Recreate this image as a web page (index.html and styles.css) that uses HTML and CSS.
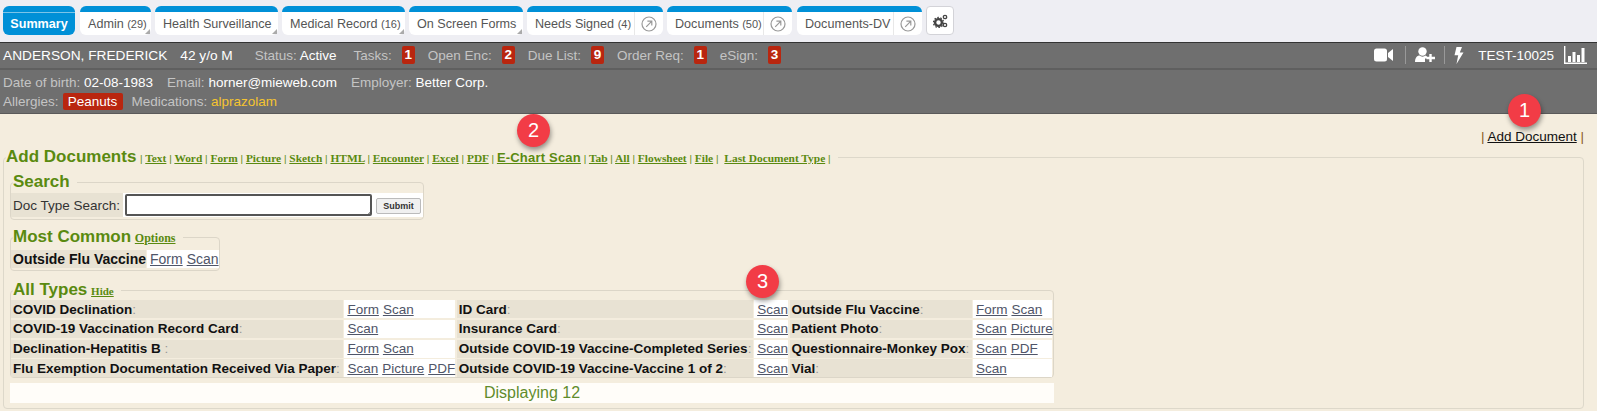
FILE: index.html
```html
<!DOCTYPE html>
<html>

<head>
    <title>Add Documents</title>
    <link rel="stylesheet" href="styles.css">
</head>

<body>
    <div class="page">
        <div class="tabs">
            <a class="tab tab-active w-summary"><span class="tab-label">Summary</span></a>
            <a class="tab w-admin"><span class="tab-label">Admin <small>(29)</small></span><i class="corner"></i></a>
            <a class="tab w-health"><span class="tab-label">Health Surveillance</span><i class="corner"></i></a>
            <a class="tab w-medical"><span class="tab-label">Medical Record <small>(16)</small></span><i class="corner"></i></a>
            <a class="tab w-forms"><span class="tab-label">On Screen Forms</span><i class="corner"></i></a>
            <a class="tab w-signed">
                <span class="tab-label">Needs Signed <small>(4)</small></span>
                <span class="tab-pop"><svg width="16" height="16" viewBox="0 0 16 16"><circle cx="8" cy="8" r="7" fill="none" stroke="#999" stroke-width="1.2"/><path d="M5.2 10.8 L10.6 5.4 M6.4 5.2 H10.8 V9.6" fill="none" stroke="#999" stroke-width="1.2"/></svg></span>
            </a>
            <a class="tab w-docs">
                <span class="tab-label">Documents <small>(50)</small></span>
                <span class="tab-pop"><svg width="16" height="16" viewBox="0 0 16 16"><circle cx="8" cy="8" r="7" fill="none" stroke="#999" stroke-width="1.2"/><path d="M5.2 10.8 L10.6 5.4 M6.4 5.2 H10.8 V9.6" fill="none" stroke="#999" stroke-width="1.2"/></svg></span>
            </a>
            <a class="tab w-docsdv">
                <span class="tab-label">Documents-DV</span>
                <span class="tab-pop"><svg width="16" height="16" viewBox="0 0 16 16"><circle cx="8" cy="8" r="7" fill="none" stroke="#999" stroke-width="1.2"/><path d="M5.2 10.8 L10.6 5.4 M6.4 5.2 H10.8 V9.6" fill="none" stroke="#999" stroke-width="1.2"/></svg></span>
            </a>
            <a class="gear-btn">
                <svg width="15" height="14" viewBox="0 0 15 14"><circle cx="5.5" cy="8.5" r="3.4" fill="none" stroke="#444" stroke-width="2.4"/><circle cx="5.5" cy="8.5" r="5" fill="none" stroke="#444" stroke-width="1.3" stroke-dasharray="1.6 1.5"/><circle cx="12" cy="3" r="1.7" fill="none" stroke="#444" stroke-width="1.3"/><circle cx="12" cy="11" r="1.7" fill="none" stroke="#444" stroke-width="1.3"/></svg>
            </a>
        </div>

        <div class="patient">
            <div class="patient-top">
                <span class="name">ANDERSON, FREDERICK</span>
                <span class="name age">42 y/o M</span>
                <span class="item status">Status: <b>Active</b></span>
                <span class="item i-tasks">Tasks:</span><span class="count">1</span>
                <span class="item">Open Enc:</span><span class="count">2</span>
                <span class="item">Due List:</span><span class="count">9</span>
                <span class="item">Order Req:</span><span class="count">1</span>
                <span class="item">eSign:</span><span class="count">3</span>
                <div class="patient-tools">
                    <svg class="tool video" width="19" height="14" viewBox="0 0 19 14"><rect x="0" y="0.5" width="13" height="13" rx="2.5" fill="#fff"/><path d="M14 5 L19 1 V13 L14 9 Z" fill="#fff"/></svg>
                    <svg class="tool adduser" width="21" height="16" viewBox="0 0 21 16"><circle cx="7.5" cy="4.5" r="4.2" fill="#fff"/><path d="M0 15 C0 10.5 2.5 8.5 4.5 8.5 C6 10 9 10 10.5 8.5 L12 9.5 V11.5 H10 V15 Z" fill="#fff"/><path d="M15.5 7 V15 M11.5 11 H20" stroke="#fff" stroke-width="2.4"/></svg>
                    <svg class="tool bolt" width="10" height="17" viewBox="0 0 10 17"><path d="M2.5 0 H8 L5.8 5.5 H9.5 L2.5 17 L4.2 8.2 H0.5 Z" fill="#fff"/></svg>
                    <span class="acct">TEST-10025</span>
                    <svg class="chart" width="23" height="18" viewBox="0 0 23 18"><path d="M0.7 0 V17.3 H23" fill="none" stroke="#fff" stroke-width="1.4"/><path d="M4 10h3v6H4z M8.5 6h3v10h-3z M13 9h3v7h-3z M17.5 2h3v14h-3z" fill="#fff"/></svg>
                </div>
            </div>
            <div class="patient-info">
                <div class="info-line">
                    <span class="item">Date of birth: <b>02-08-1983</b></span>
                    <span class="item">Email: <b>horner@mieweb.com</b></span>
                    <span class="item">Employer: <b>Better Corp.</b></span>
                </div>
                <div class="info-line info-line-short">
                    <span class="item item-tight">Allergies:</span><span class="allergy">Peanuts</span>
                    <span class="item">Medications: <em>alprazolam</em></span>
                </div>
            </div>
        </div>

        <div class="content">
            <div class="add-link"><span class="pipe">|</span> <a>Add Document</a> <span class="pipe">|</span></div>

            <fieldset class="docs">
                <legend>
                    <span class="title">Add Documents</span>
                    <span class="nav">| <a>Text</a> | <a>Word</a> | <a>Form</a> | <a>Picture</a> | <a>Sketch</a> | <a>HTML</a> | <a>Encounter</a> | <a>Excel</a> | <a>PDF</a> | <a class="big">E-Chart Scan</a> | <a>Tab</a> | <a>All</a> | <a>Flowsheet</a> | <a>File</a> | <a class="last">Last Document Type</a> |</span>
                </legend>

                <fieldset class="group group-search">
                    <legend><span class="group-title">Search</span></legend>
                    <div class="search-row">
                        <label class="cell-label plain">Doc Type Search:</label>
                        <div class="cell-field">
                            <div class="fake-input"></div>
                            <button type="button" class="submit">Submit</button>
                        </div>
                    </div>
                </fieldset>

                <fieldset class="group group-common">
                    <legend><span class="group-title">Most Common</span> <a class="small-link">Options</a></legend>
                    <div class="common-row">
                        <div class="cell-label"><b>Outside Flu Vaccine</b>:</div>
                        <div class="cell-links"><a>Form</a> <a>Scan</a></div>
                    </div>
                </fieldset>

                <fieldset class="group group-all">
                    <legend><span class="group-title">All Types</span> <a class="small-link">Hide</a></legend>
                    <div class="types">
                        <div class="cell-label"><b>COVID Declination</b>:</div>
                        <div class="cell-links"><a>Form</a> <a>Scan</a></div>
                        <div class="cell-label"><b>ID Card</b>:</div>
                        <div class="cell-links"><a>Scan</a></div>
                        <div class="cell-label"><b>Outside Flu Vaccine</b>:</div>
                        <div class="cell-links"><a>Form</a> <a>Scan</a></div>

                        <div class="cell-label"><b>COVID-19 Vaccination Record Card</b>:</div>
                        <div class="cell-links"><a>Scan</a></div>
                        <div class="cell-label"><b>Insurance Card</b>:</div>
                        <div class="cell-links"><a>Scan</a></div>
                        <div class="cell-label"><b>Patient Photo</b>:</div>
                        <div class="cell-links"><a>Scan</a> <a>Picture</a></div>

                        <div class="cell-label"><b>Declination-Hepatitis B&nbsp;</b>:</div>
                        <div class="cell-links"><a>Form</a> <a>Scan</a></div>
                        <div class="cell-label"><b>Outside COVID-19 Vaccine-Completed Series</b>:</div>
                        <div class="cell-links"><a>Scan</a></div>
                        <div class="cell-label"><b>Questionnaire-Monkey Pox</b>:</div>
                        <div class="cell-links"><a>Scan</a> <a>PDF</a></div>

                        <div class="cell-label"><b>Flu Exemption Documentation Received Via Paper</b>:</div>
                        <div class="cell-links"><a>Scan</a> <a>Picture</a> <a>PDF</a></div>
                        <div class="cell-label"><b>Outside COVID-19 Vaccine-Vaccine 1 of 2</b>:</div>
                        <div class="cell-links"><a>Scan</a></div>
                        <div class="cell-label"><b>Vial</b>:</div>
                        <div class="cell-links"><a>Scan</a></div>
                    </div>
                </fieldset>

                <div class="displaying">Displaying 12</div>
            </fieldset>

            <span class="marker marker-1">1</span>
            <span class="marker marker-2">2</span>
            <span class="marker marker-3">3</span>
        </div>
    </div>
</body>

</html>
```

FILE: styles.css
```css
body {
    margin: 0;
    background-color: #fff;
    font-family: "Liberation Sans", Arial, sans-serif;
    font-size: 13.5px;
}

.page {
    width: 1597px;
    height: 411px;
    overflow: hidden;
}

/* tabs */
.tabs {
    display: flex;
    gap: 4px;
    box-sizing: border-box;
    height: 42px;
    padding: 6px 0 0 3px;
    background-color: #eeeef3;
}

.tab {
    display: flex;
    position: relative;
    box-sizing: border-box;
    height: 29px;
    border-top: 6px solid #0090d7;
    border-radius: 6px;
    background-color: #fff;
    color: #555;
    font-size: 12.6px;
    line-height: 24px;
}

.tab small {
    font-size: 11px;
}

.tab-label {
    padding-left: 8px;
    white-space: nowrap;
}

.tab-active {
    justify-content: center;
    background-color: #0090d7;
    box-shadow: inset 0 1px 0 #7cc4e8;
    color: #fff;
    font-weight: bold;
}

.tab-active .tab-label {
    padding-left: 0;
}

.w-summary { width: 72px; margin-right: 1px; }
.w-admin { width: 71px; }
.w-health { width: 123px; }
.w-medical { width: 123px; }
.w-forms { width: 114px; }
.w-signed { width: 136px; }
.w-docs { width: 125px; margin-right: 1px; }
.w-docsdv { width: 125px; }

.corner {
    position: absolute;
    right: 1px;
    bottom: 1px;
    width: 0;
    height: 0;
    border-style: solid;
    border-width: 0 0 5px 5px;
    border-color: transparent transparent #aaa transparent;
}

.tab-pop {
    display: flex;
    align-items: center;
    justify-content: center;
    box-sizing: border-box;
    width: 29px;
    margin-left: auto;
    border-left: 1px solid #e8e8e8;
}

.gear-btn {
    display: flex;
    align-items: center;
    justify-content: center;
    box-sizing: border-box;
    width: 28px;
    height: 29px;
    border: 1px solid #d3d3d8;
    border-radius: 4px;
    background-color: #fff;
}

/* patient header */
.patient {
    box-sizing: border-box;
    height: 72px;
    border-top: 1px solid #333;
    border-bottom: 1px solid #5a5a5a;
    background-color: #6f6f6f;
    color: #c4c4c4;
}

.patient-top {
    display: flex;
    align-items: center;
    box-sizing: border-box;
    height: 27px;
    padding: 0 0 1px 3px;
    border-bottom: 2px solid #5f5f5f;
}

.name {
    color: #fff;
    font-size: 13.7px;
    white-space: nowrap;
}

.age {
    margin-left: 13px;
}

.item {
    white-space: nowrap;
}

.item b {
    font-weight: normal;
    color: #fff;
}

.status {
    margin-left: 22px;
}

.i-tasks {
    margin-left: 17px;
}

.count {
    box-sizing: border-box;
    width: 13px;
    height: 18px;
    margin: 0 13px 0 10px;
    border-radius: 2px;
    background-color: #b9260f;
    color: #fff;
    font-weight: bold;
    line-height: 18px;
    text-align: center;
}

.patient-tools {
    display: flex;
    align-items: center;
    margin-left: auto;
    padding-right: 10px;
    color: #fff;
}

.tool {
    padding-right: 11px;
}

.video {
    padding: 2px 12px 2px 0;
    border-right: 1px solid #999;
}

.adduser {
    padding: 1px 8px 1px 9px;
    border-right: 1px solid #999;
}

.bolt {
    margin-left: 9px;
    padding-right: 14px;
}

.acct {
    margin-right: 10px;
}

.patient-info {
    padding: 2px 3px 0;
}

.info-line {
    display: flex;
    align-items: center;
    height: 20px;
}

.info-line-short {
    height: 19px;
}

.info-line .item {
    margin-right: 14px;
}

.info-line .item-tight {
    margin-right: 0;
}

.allergy {
    width: 60px;
    height: 17px;
    margin: 0 9px 0 4px;
    border-radius: 2px;
    background-color: #b9260f;
    color: #fff;
    line-height: 17px;
    text-align: center;
}

.item em {
    font-style: normal;
    color: #f5c431;
}

/* content */
.content {
    position: relative;
    box-sizing: border-box;
    height: 297px;
    padding: 15px 13px 0 3px;
    background-color: #f4edde;
}

.add-link {
    height: 18px;
    color: #333;
    text-align: right;
}

.add-link a {
    color: #111;
    text-decoration: underline;
}

.pipe {
    color: #8a5a20;
}

fieldset {
    margin: 0;
    padding: 0;
    border: 1px solid #ddd8ca;
    border-radius: 4px;
}

legend {
    padding: 0;
}

.docs {
    box-sizing: border-box;
    height: 262px;
    padding: 0 6px;
}

.docs > legend {
    margin-left: -4px;
    padding-right: 7px;
    line-height: 20px;
}

.title {
    color: #5a8a10;
    font-size: 17px;
    font-weight: bold;
}

.nav {
    color: #5a8a10;
    font-family: "Liberation Serif", "Times New Roman", serif;
    font-size: 11.4px;
    font-weight: bold;
}

.nav a {
    text-decoration: underline;
}

.nav .big {
    font-family: "Liberation Sans", Arial, sans-serif;
    font-size: 13px;
    letter-spacing: 0.2px;
}

.nav .last {
    margin-left: 3px;
}

.group {
    box-sizing: border-box;
    border-color: #dcd6c8;
}

.group > legend {
    margin-left: 2px;
    padding-right: 7px;
    line-height: 18px;
}

.group-title {
    color: #5a8a10;
    font-size: 17px;
    font-weight: bold;
}

.small-link {
    color: #5a8a10;
    font-family: "Liberation Serif", "Times New Roman", serif;
    font-size: 12px;
    font-weight: bold;
    text-decoration: underline;
}

.group-all .small-link {
    font-size: 11px;
}

.group-search {
    width: 414px;
    margin-top: 5px;
    padding: 1px 0 2px;
}

.group-common {
    width: 210px;
    margin-top: 8px;
    padding: 3px 0 2px;
}

.group-all {
    width: 1044px;
    margin-top: 10px;
    padding: 0;
}

.cell-label {
    display: flex;
    align-items: center;
    box-sizing: border-box;
    padding-left: 2px;
    background-color: #e8e2d3;
    color: #999;
    white-space: nowrap;
}

.cell-label b {
    color: #111;
}

.plain {
    color: #333;
}

.cell-links {
    display: flex;
    align-items: center;
    gap: 4px;
    box-sizing: border-box;
    padding-left: 3px;
    background-color: #fff;
    white-space: nowrap;
}

.cell-links a {
    color: #4f5568;
    text-decoration: underline;
}

.search-row {
    display: grid;
    grid-template-columns: 112px 1fr;
    height: 24px;
}

.cell-field {
    display: flex;
    align-items: center;
    padding-left: 2px;
    background-color: #fff;
}

.fake-input {
    box-sizing: border-box;
    width: 247px;
    height: 22px;
    border: 2px solid #555;
    border-radius: 2px;
    background-color: #fff;
    background-image: linear-gradient(135deg, transparent 0 85%, #999 85%);
    background-size: 7px 7px;
    background-position: right bottom;
    background-repeat: no-repeat;
}

.submit {
    box-sizing: border-box;
    width: 45px;
    height: 16px;
    margin: 2px 0 0 4px;
    padding: 0;
    border: 1px solid #bbb;
    border-radius: 2px;
    background-color: #f0f0f0;
    color: #333;
    font-family: "Liberation Sans", Arial, sans-serif;
    font-size: 9px;
    font-weight: bold;
}

.common-row {
    display: grid;
    grid-template-columns: 135px 72px;
    column-gap: 1px;
    height: 18px;
    font-size: 14px;
}

.types {
    display: grid;
    grid-template-columns: 332px 111px 296px 34px 182px 79px;
    grid-auto-rows: 18px;
    row-gap: 1.8px;
    column-gap: 1.4px;
}

.displaying {
    box-sizing: border-box;
    width: 1044px;
    height: 20px;
    margin-top: 5px;
    background-color: #fffdf9;
    color: #5f8c2c;
    font-size: 16px;
    line-height: 20px;
    text-align: center;
}

/* numbered callouts laid over the page */
.marker {
    position: absolute;
    width: 33px;
    height: 33px;
    border-radius: 50%;
    background-color: #f23c46;
    box-shadow: 1px 3px 5px rgba(0, 0, 0, 0.4);
    color: #fff;
    font-size: 20px;
    line-height: 33px;
    text-align: center;
}

.marker-1 { left: 1508px; top: -20px; }
.marker-2 { left: 517px; top: 0; }
.marker-3 { left: 746px; top: 151px; }
```
